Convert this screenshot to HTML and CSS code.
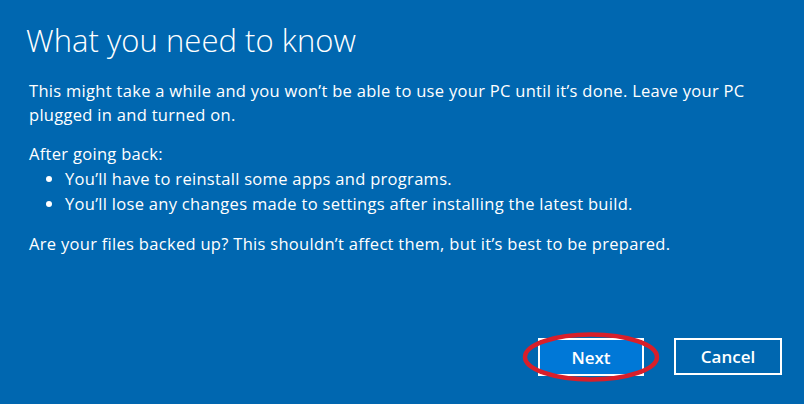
FILE: index.html
```html
<!DOCTYPE html>
<html lang="en">
<head>
    <meta charset="UTF-8">
    <meta name="viewport" content="width=device-width, initial-scale=1.0">
    <title>What you need to know</title>
    <link rel="stylesheet" href="styles.css">
</head>
<body>
    <div class="dialog">
        <h1 class="title">What you need to know</h1>
        <p class="text">This might take a while and you won’t be able to use your PC until it’s done. Leave your PC plugged in and turned on.</p>
        <p class="text lead">After going back:</p>
        <ul class="list">
            <li>You’ll have to reinstall some apps and programs.</li>
            <li>You’ll lose any changes made to settings after installing the latest build.</li>
        </ul>
        <p class="text">Are your files backed up? This shouldn’t affect them, but it’s best to be prepared.</p>

        <div class="actions">
            <div class="btn-wrap">
                <button class="btn btn-primary">Next</button>
                <!-- red marker drawn round the button -->
                <svg class="marker" width="140" height="52" viewBox="0 0 140 52">
                    <ellipse cx="70" cy="26" rx="66" ry="22.5" fill="none" stroke="#d81f2a" stroke-width="4.5"/>
                </svg>
            </div>
            <button class="btn">Cancel</button>
        </div>
    </div>
</body>
</html>
```

FILE: styles.css
```css
html, body { margin: 0; height: 100%; }
body { background: #0067b0; color: #fff; font-family: "Open Sans", "Noto Sans", Arial, sans-serif; }

.dialog { height: 100%; box-sizing: border-box; padding: 22px 22px 28px 29px; display: flex; flex-direction: column; }
.title { margin: 0 0 21px -3px; font-size: 31px; font-weight: 300; line-height: 36px; letter-spacing: 0.05px; }

.text { margin: 0; font-size: 16.5px; line-height: 24px; letter-spacing: 0.3px; }
.lead { margin-top: 15px; }
.list { margin: 0 0 16px 0; padding-left: 36px; font-size: 16.5px; line-height: 25px; letter-spacing: 0.3px; }

.actions { margin-top: auto; display: flex; justify-content: flex-end; gap: 30px; }
.btn-wrap { position: relative; }
.btn { width: 108px; height: 37px; box-sizing: border-box; border: 2px solid #fff; background: transparent; color: #fff; font-family: "Open Sans", Arial, sans-serif; font-size: 17px; font-weight: 600; cursor: pointer; }
.btn-primary { width: 106px; height: 38px; background: #0078d7; }
.marker { position: absolute; left: -17px; top: -7px; pointer-events: none; }
```
